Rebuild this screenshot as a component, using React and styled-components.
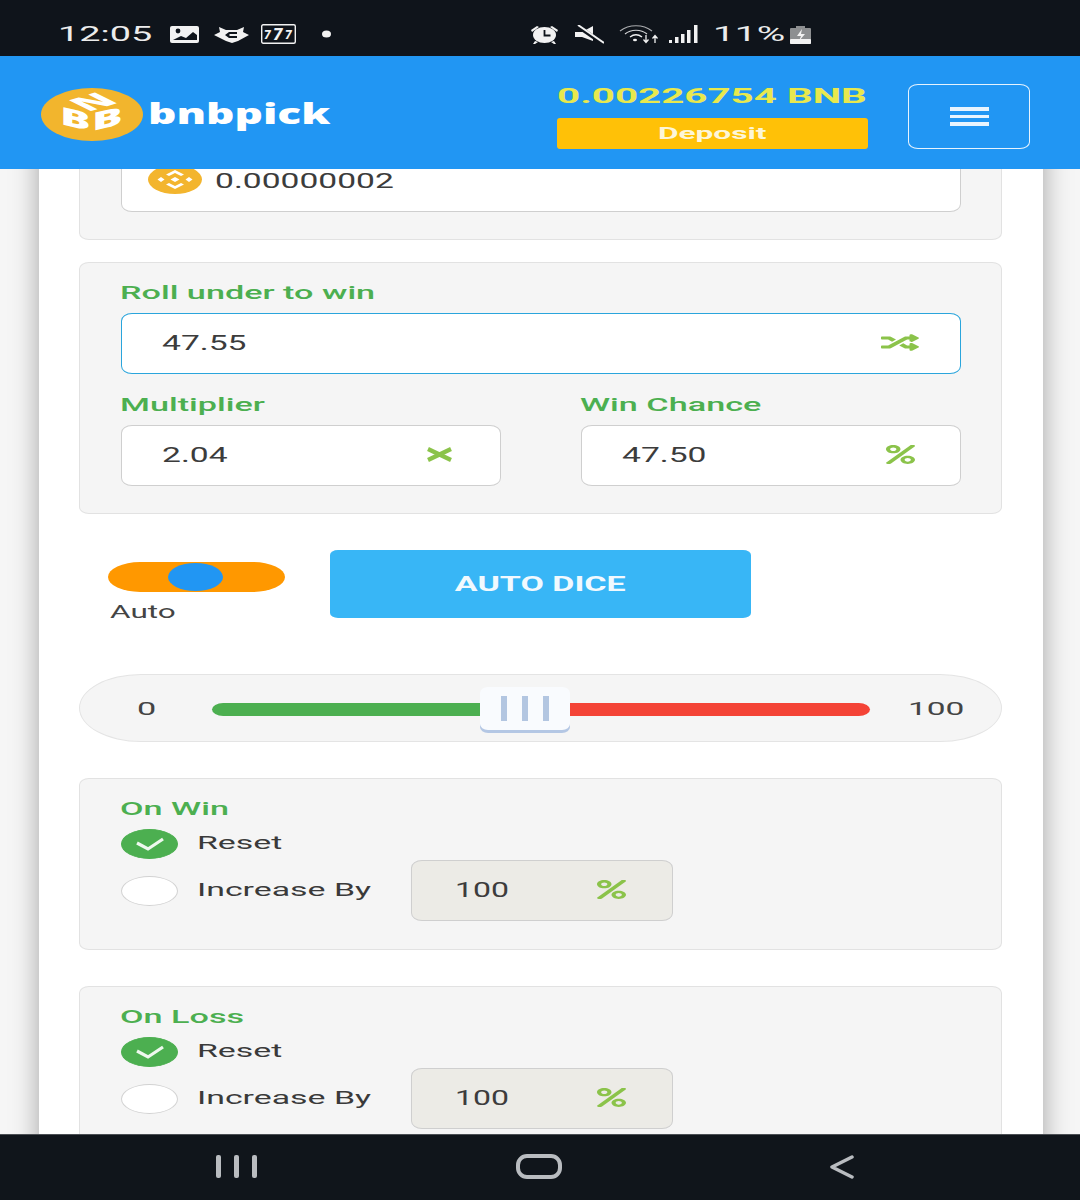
import React from 'react';
import styled, { createGlobalStyle } from 'styled-components';
import { FaRandom, FaPercent } from 'react-icons/fa';

const GlobalStyle = createGlobalStyle`
  html, body {
    margin: 0;
    padding: 0;
    background: #f6f6f6;
    font-family: Roboto, "Liberation Sans", sans-serif;
  }
`;

const Page = styled.div`
  width: 1080px;
  height: 1200px;
  display: flex;
  flex-direction: column;
  overflow: hidden;
`;

// the whole screenshot is stretched sideways, so text gets a scaleX
const Wide = styled.span`
  display: inline-block;
  white-space: nowrap;
  transform: scaleX(${(p) => p.$sx || 1.6});
  transform-origin: ${(p) => (p.$center ? 'center' : 'left')} center;
`;

const StatusBar = styled.div`
  box-sizing: border-box;
  height: 56px;
  flex: none;
  background: #0f141b;
  display: flex;
  align-items: center;
  padding: 12px 0 0 58px;
  color: #ececec;
  position: relative;
  z-index: 3;
`;

const StatusTime = styled.div`
  width: 112px;
  font-size: 21px;
`;

const StatusIcon = styled.svg`
  display: block;
  flex: none;
  margin-left: ${(p) => p.$ml || 0}px;
`;

const StatusPercent = styled.div`
  width: 70px;
  margin-left: 15px;
  font-size: 21px;
`;

const Header = styled.header`
  height: 113px;
  flex: none;
  background: #2196f3;
  display: flex;
  align-items: center;
  padding: 0 50px 0 41px;
  position: relative;
  z-index: 2;
`;

const Brand = styled.div`
  display: flex;
  align-items: center;
  width: 516px;
  padding-top: 4px;
`;

const BrandName = styled.div`
  margin: 0 0 4px 5px;
  color: #fff;
  font-family: "Open Sans", sans-serif;
  font-weight: 800;
  font-size: 28px;
  line-height: 30px;
`;

const Wallet = styled.div`
  width: 311px;
  margin-right: 40px;
  padding-top: 7px;
`;

const Balance = styled.div`
  color: #e8e84e;
  font-weight: 700;
  font-size: 21px;
  line-height: 26px;
  margin-bottom: 9px;
`;

const DepositButton = styled.button`
  display: flex;
  align-items: center;
  justify-content: center;
  width: 311px;
  height: 31px;
  padding: 0 0 2px;
  border: none;
  border-radius: 3px;
  background: #ffc107;
  color: #fdf6d8;
  font-family: inherit;
  font-weight: 700;
  font-size: 17px;
`;

const MenuButton = styled.button`
  width: 122px;
  height: 65px;
  padding: 0;
  border: 1.5px solid #e6f3fe;
  border-radius: 10px / 7px;
  background: transparent;
  display: flex;
  flex-direction: column;
  align-items: center;
  justify-content: center;
  gap: 4px;
  margin-top: 8px;
`;

const MenuLine = styled.span`
  display: block;
  width: 39px;
  height: 3.5px;
  background: #e8f4fe;
`;

const Viewport = styled.main`
  flex: 1;
  min-height: 0;
  overflow: hidden;
`;

const Panel = styled.div`
  margin: 0 37px 0 39px;
  padding: 0 41px 0 40px;
  background: #fff;
  box-shadow: 0 0 26px rgba(0, 0, 0, 0.34);
  min-height: 1100px;
`;

const Card = styled.section`
  box-sizing: border-box;
  background: #f5f5f5;
  border: 1px solid #e2e2e2;
  border-radius: 10px / 7px;
  padding: ${(p) => p.$top || 17}px 40px ${(p) => p.$bottom || 27}px 41px;
  margin-top: ${(p) => p.$mt || 0}px;
`;

const FieldLabel = styled.div`
  color: #4caf50;
  font-weight: 500;
  font-size: 19px;
  line-height: 26px;
  margin: ${(p) => p.$mt || 0}px 0 7px -1px;
`;

const Field = styled.div`
  box-sizing: border-box;
  height: 61px;
  width: ${(p) => p.$w || '100%'};
  background: ${(p) => p.$bg || '#fff'};
  border: 1px solid ${(p) => (p.$active ? '#2aa5dc' : '#cfcfcf')};
  border-radius: 11px / 8px;
  display: flex;
  align-items: center;
  justify-content: space-between;
  padding: 0 ${(p) => p.$pr || 42}px 1px ${(p) => p.$pl || 40}px;
  color: #3c3c3c;
  font-size: 20px;
`;

const AmountField = styled(Field)`
  justify-content: flex-start;
  padding: 0 26px 2px;
`;

const Coin = styled.svg`
  flex: none;
  margin: -2px 13px 0 0;
`;

const AmountText = styled.div`
  font-size: 21px;
`;

const FieldRow = styled.div`
  display: flex;
  justify-content: space-between;
`;

const FieldColumn = styled.div`
  width: 380px;
`;

const ShuffleIcon = styled(FaRandom)`
  width: 38px;
  height: 19px;
  margin-bottom: 2px;
  color: #8bc34a;
`;

const TimesIcon = styled.svg`
  width: 27px;
  height: 15px;
  margin: 0 5px 2px 0;
`;

const PercentIcon = styled(FaPercent)`
  width: 29px;
  height: 19px;
  margin-bottom: 2px;
  color: #8bc34a;
`;

const AutoRow = styled.div`
  display: flex;
  align-items: flex-start;
  height: 68px;
  margin-top: 36px;
  padding-left: 29px;
`;

const AutoToggle = styled.div`
  width: 177px;
  margin: 12px 45px 0 0;
`;

const ToggleTrack = styled.div`
  height: 30px;
  border-radius: 32px / 15px;
  background: #ff9800;
  display: flex;
  align-items: center;
  justify-content: center;
`;

const ToggleKnob = styled.div`
  width: 55px;
  height: 28px;
  margin-right: 3px;
  border-radius: 50%;
  background: #2196f3;
`;

const ToggleLabel = styled.div`
  margin: 8px 0 0 2px;
  color: #444;
  font-size: 18px;
  line-height: 24px;
`;

const AutoButton = styled.button`
  width: 421px;
  height: 68px;
  padding: 0 0 1px;
  border: none;
  border-radius: 8px / 5px;
  background: #38b6f6;
  color: #f1f9fe;
  font-family: inherit;
  font-weight: 700;
  font-size: 20px;
`;

const Slider = styled.div`
  box-sizing: border-box;
  height: 68px;
  margin-top: 56px;
  border: 1px solid #e4e4e4;
  border-radius: 62px / 34px;
  background: #f5f5f5;
  display: flex;
  align-items: center;
  padding-left: 57px;
  color: #444;
  font-size: 19px;
`;

const SliderMin = styled.div`
  width: 75px;
`;

const SliderMax = styled.div`
  margin-left: 38px;
`;

const Track = styled.div`
  width: 658px;
  display: flex;
  align-items: center;
  margin-top: 3px;
`;

const TrackPart = styled.div`
  height: 13px;
  background: ${(p) => p.$color};
  width: ${(p) => p.$w}px;
  border-radius: ${(p) => (p.$left ? '12px 0 0 12px / 7px 0 0 7px' : '0 12px 12px 0 / 0 7px 7px 0')};
`;

const Thumb = styled.div`
  box-sizing: border-box;
  width: 90px;
  height: 43px;
  margin-bottom: 3px;
  flex: none;
  background: #f9fbfe;
  border-radius: 8px / 6px;
  box-shadow: 0 3px 0 #b4c7e4;
  display: flex;
  align-items: center;
  justify-content: center;
  gap: 15px;
`;

const ThumbLine = styled.span`
  width: 6px;
  height: 25px;
  background: #b3c6e1;
`;

const OptionRow = styled.div`
  display: flex;
  align-items: center;
  margin-top: ${(p) => p.$mt || 0}px;
`;

const Radio = styled.div`
  box-sizing: border-box;
  width: 57px;
  height: 30px;
  flex: none;
  border-radius: 50%;
  border: 1px solid ${(p) => (p.$on ? '#4caf50' : '#d2d2d2')};
  background: ${(p) => (p.$on ? '#4caf50' : '#fff')};
  display: flex;
  align-items: center;
  justify-content: center;
`;

const OptionText = styled.div`
  width: 214px;
  margin-left: 19px;
  color: #3a3a3a;
  font-size: 18px;
  padding-bottom: 3px;
`;

const OptionCard = styled(Card)`
  margin-top: 36px;
`;

const NavBar = styled.footer`
  height: 66px;
  flex: none;
  box-sizing: border-box;
  background: #10151b;
  border-top: 1px solid #4b4f54;
  display: flex;
  align-items: center;
  padding: 0 0 2px 216px;
  position: relative;
  z-index: 3;
`;

const NavIcon = styled.svg`
  display: block;
  flex: none;
  margin-left: ${(p) => p.$ml || 0}px;
`;

function Logo() {
  return (
    <svg width="102" height="53" viewBox="0 0 102 53">
      <ellipse cx="51" cy="26.5" rx="51" ry="26.5" fill="#f2b52d" />
      <g fill="#fff" fontFamily="Open Sans, sans-serif" fontWeight="800">
        <text transform="matrix(1.75 0.4 0 0.95 19 36)" fontSize="26">B</text>
        <text transform="matrix(1.75 -0.4 0 0.95 51 43)" fontSize="26">B</text>
        <text transform="matrix(2 -0.6 1.6 0.8 47 24)" fontSize="19">N</text>
      </g>
    </svg>
  );
}

function CoinIcon() {
  return (
    <Coin width="54" height="29" viewBox="0 0 54 29">
      <ellipse cx="27" cy="14.5" rx="27" ry="14.5" fill="#f3b52e" />
      <g fill="#fff">
        <path d="M27 5l9 4.5-3 1.5-6-3-6 3-3-1.5z" />
        <path d="M27 24l9-4.5-3-1.5-6 3-6-3-3 1.5z" />
        <path d="M27 12l4.5 2.5L27 17l-4.5-2.5z" />
        <path d="M13 12l3.5 2.5L13 17l-3.5-2.5z" />
        <path d="M41 12l3.5 2.5L41 17l-3.5-2.5z" />
      </g>
    </Coin>
  );
}

function OptionsCard({ title }) {
  return (
    <OptionCard $bottom={28}>
      <FieldLabel><Wide $sx={1.8}>{title}</Wide></FieldLabel>
      <OptionRow>
        <Radio $on>
          <svg width="30" height="14" viewBox="0 0 30 14">
            <path d="M2 6l11 6L28 2" fill="none" stroke="#eef8ee" strokeWidth="3.2" />
          </svg>
        </Radio>
        <OptionText><Wide $sx={1.88}>Reset</Wide></OptionText>
      </OptionRow>
      <OptionRow $mt={1}>
        <Radio />
        <OptionText><Wide $sx={1.88}>Increase By</Wide></OptionText>
        <Field $w="262px" $bg="#ecebe6" $pl={43} $pr={46}>
          <Wide>100</Wide>
          <PercentIcon preserveAspectRatio="none" />
        </Field>
      </OptionRow>
    </OptionCard>
  );
}

export default function App() {
  return (
    <Page>
      <GlobalStyle />
      <StatusBar>
        <StatusTime><Wide $sx={1.8}>12:05</Wide></StatusTime>
        {/* gallery */}
        <StatusIcon width="29" height="17" viewBox="0 0 29 17">
          <rect width="29" height="17" rx="2" fill="#f2f2f2" />
          <circle cx="8" cy="5" r="2.4" fill="#0f141b" />
          <path d="M3 14l8-4 5 2 7-6 4 3v5z" fill="#0f141b" />
        </StatusIcon>
        {/* fox */}
        <StatusIcon $ml={15} width="35" height="17" viewBox="0 0 35 17">
          <path d="M0 9l6-3-1-5 7 3h11l7-3-1 5 6 3-11 6-6 2-6-2z" fill="#f2f2f2" />
          <path d="M23 6h-8l-4 3 4 3h8v-2h-7l-1-1 1-1h7z" fill="#0f141b" />
        </StatusIcon>
        {/* slots */}
        <StatusIcon $ml={12} width="35" height="20" viewBox="0 0 35 20">
          <rect x="0.7" y="0.7" width="33.6" height="18.6" rx="1.5" fill="none" stroke="#f2f2f2" strokeWidth="1.4" />
          <text y="15" fill="#f2f2f2" fontFamily="Roboto, sans-serif" fontStyle="italic" fontWeight="900">
            <tspan x="3" fontSize="12">7</tspan>
            <tspan x="12" y="16" fontSize="17">7</tspan>
            <tspan x="24" y="15" fontSize="12">7</tspan>
          </text>
        </StatusIcon>
        <StatusIcon $ml={26} width="9" height="8" viewBox="0 0 9 8">
          <ellipse cx="4.5" cy="4" rx="4.5" ry="3.5" fill="#f2f2f2" />
        </StatusIcon>
        {/* alarm */}
        <StatusIcon $ml={199} width="29" height="19" viewBox="0 0 29 19">
          <ellipse cx="14.5" cy="10" rx="11.5" ry="8" fill="#f2f2f2" />
          <path d="M1 5l6-4 2 1-7 5zM28 5l-6-4-2 1 7 5zM5 16l-2 3h2l3-2zM24 16l2 3h-2l-3-2z" fill="#f2f2f2" />
          <path d="M14.5 5v5.5h6" fill="none" stroke="#0f141b" strokeWidth="1.8" />
        </StatusIcon>
        {/* muted */}
        <StatusIcon $ml={16} width="29" height="19" viewBox="0 0 29 19">
          <path d="M0 7h7l11-6v15l-11-4H0z" fill="#f2f2f2" />
          <path d="M1 0l26 18" stroke="#0f141b" strokeWidth="4" />
          <path d="M3 0l26 18" stroke="#f2f2f2" strokeWidth="2" />
        </StatusIcon>
        {/* wifi */}
        <StatusIcon $ml={15} width="41" height="19" viewBox="0 0 41 19" fill="none">
          <path d="M1 6c9-7 23-7 32 0" stroke="#a9abae" strokeWidth="1.2" />
          <path d="M6 9c6-5 16-5 22 0" stroke="#d6d7d8" strokeWidth="1.2" />
          <path d="M11 12c4-3 8-3 12 0" stroke="#f2f2f2" strokeWidth="1.4" />
          <ellipse cx="16" cy="15" rx="2" ry="1.3" fill="#f2f2f2" />
          <path d="M27 10v7M24.5 14.5l2.5 3 2.5-3M36 18v-7M33.5 13.5l2.5-3 2.5 3" stroke="#f2f2f2" strokeWidth="1.3" />
        </StatusIcon>
        {/* signal */}
        <StatusIcon $ml={9} width="29" height="18" viewBox="0 0 29 18" fill="#f2f2f2">
          <rect x="0" y="15" width="3" height="3" />
          <rect x="6" y="12" width="3.5" height="6" />
          <rect x="12" y="9" width="3.5" height="9" />
          <rect x="18" y="5" width="3.5" height="13" />
          <rect x="25" y="0" width="3.5" height="18" />
        </StatusIcon>
        <StatusPercent><Wide $sx={1.85}>11%</Wide></StatusPercent>
        {/* battery */}
        <StatusIcon $ml={7} width="21" height="19" viewBox="0 0 21 19">
          <path d="M6 1h9v2h5a1 1 0 0 1 1 1v14a1 1 0 0 1-1 1H1a1 1 0 0 1-1-1V4a1 1 0 0 1 1-1h5z" fill="#8d8f91" />
          <rect y="14" width="21" height="5" rx="1" fill="#f2f2f2" />
          <path d="M12 4l-5 7h4l-2 5 6-7h-4z" fill="#f2f2f2" />
        </StatusIcon>
      </StatusBar>

      <Header>
        <Brand>
          <Logo />
          <BrandName><Wide $sx={1.58}>bnbpick</Wide></BrandName>
        </Brand>
        <Wallet>
          <Balance><Wide $sx={1.92}>0.00226754 BNB</Wide></Balance>
          <DepositButton><Wide $center $sx={1.86}>Deposit</Wide></DepositButton>
        </Wallet>
        <MenuButton aria-label="menu">
          <MenuLine />
          <MenuLine />
          <MenuLine />
        </MenuButton>
      </Header>

      <Viewport>
        <Panel>
          <Card $top={50} $mt={-69}>
            <AmountField>
              <CoinIcon />
              <AmountText><Wide>0.00000002</Wide></AmountText>
            </AmountField>
          </Card>

          <Card $mt={22}>
            <FieldLabel><Wide $sx={1.8}>Roll under to win</Wide></FieldLabel>
            <Field $active $pr={41}>
              <Wide $sx={1.68}>47.55</Wide>
              <ShuffleIcon preserveAspectRatio="none" />
            </Field>
            <FieldRow>
              <FieldColumn>
                <FieldLabel $mt={18}><Wide $sx={1.8}>Multiplier</Wide></FieldLabel>
                <Field>
                  <Wide $sx={1.68}>2.04</Wide>
                  <TimesIcon viewBox="0 0 27 15" preserveAspectRatio="none">
                    <path d="M2 2L25 13M25 2L2 13" stroke="#8bc34a" strokeWidth="4.2" fill="none" />
                  </TimesIcon>
                </Field>
              </FieldColumn>
              <FieldColumn>
                <FieldLabel $mt={18}><Wide $sx={1.8}>Win Chance</Wide></FieldLabel>
                <Field $pr={45}>
                  <Wide $sx={1.68}>47.50</Wide>
                  <PercentIcon preserveAspectRatio="none" />
                </Field>
              </FieldColumn>
            </FieldRow>
          </Card>

          <AutoRow>
            <AutoToggle>
              <ToggleTrack><ToggleKnob /></ToggleTrack>
              <ToggleLabel><Wide $sx={1.75}>Auto</Wide></ToggleLabel>
            </AutoToggle>
            <AutoButton><Wide $center $sx={1.7}>AUTO DICE</Wide></AutoButton>
          </AutoRow>

          <Slider>
            <SliderMin><Wide $sx={1.8}>0</Wide></SliderMin>
            <Track>
              <TrackPart $left $color="#4caf50" $w={268} />
              <Thumb>
                <ThumbLine />
                <ThumbLine />
                <ThumbLine />
              </Thumb>
              <TrackPart $color="#f44336" $w={300} />
            </Track>
            <SliderMax><Wide $sx={1.76}>100</Wide></SliderMax>
          </Slider>

          <OptionsCard title="On Win" />
          <OptionsCard title="On Loss" />
        </Panel>
      </Viewport>

      <NavBar>
        <NavIcon width="41" height="23" viewBox="0 0 41 23" fill="#b9bcc0">
          <rect x="0" width="5" height="23" rx="2" />
          <rect x="18" width="5" height="23" rx="2" />
          <rect x="36" width="5" height="23" rx="2" />
        </NavIcon>
        <NavIcon $ml={259} width="46" height="25" viewBox="0 0 46 25">
          <rect x="2" y="2" width="42" height="21" rx="9" fill="none" stroke="#b9bcc0" strokeWidth="4" />
        </NavIcon>
        <NavIcon $ml={267} width="25" height="24" viewBox="0 0 25 24">
          <path d="M23 2L3 12l20 10" fill="none" stroke="#b9bcc0" strokeWidth="3.5" strokeLinecap="round" strokeLinejoin="round" />
        </NavIcon>
      </NavBar>
    </Page>
  );
}
